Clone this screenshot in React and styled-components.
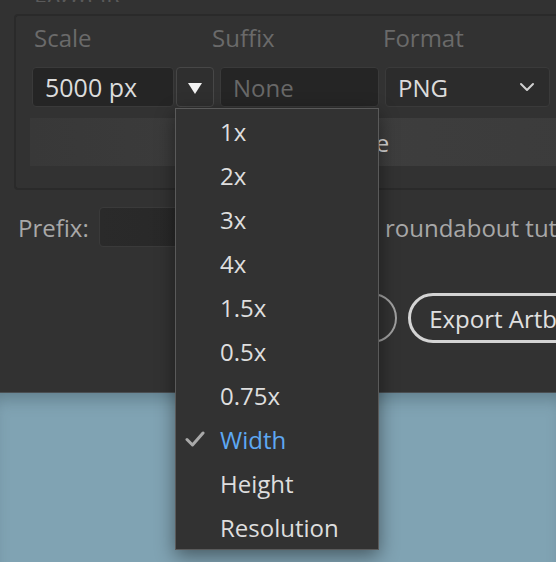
import React from "react";
import styled, { createGlobalStyle } from "styled-components";

const GlobalStyle = createGlobalStyle`
  html, body {
    margin: 0;
    padding: 0;
    height: 100%;
    overflow: hidden;
    background: #80a3b3;
    font-family: "Open Sans", "DejaVu Sans", sans-serif;
  }
  #root {
    height: 100%;
  }
`;

const Page = styled.div`
  height: 100%;
  display: flex;
  flex-direction: column;
`;

const Dialog = styled.div`
  position: relative;
  height: 393px;
  flex: none;
  background: #323232;
  border-bottom: 1px solid #4a4f52;
  box-sizing: border-box;
  padding: 14px 0 0 14px;
  z-index: 1;
`;

const Desktop = styled.div`
  flex: 1;
  background: #80a3b3;
  box-shadow: inset 0 14px 16px -8px rgba(40, 60, 70, 0.35);
`;

const Group = styled.div`
  width: 640px;
  height: 176px;
  box-sizing: border-box;
  border: 2px solid #2a2a2a;
  border-right: none;
  border-radius: 4px 0 0 4px;
  padding: 6px 0 0 16px;
`;

const LabelRow = styled.div`
  display: flex;
  height: 32px;
  margin-bottom: 13px;
`;

const ColLabel = styled.span`
  width: ${(p) => p.$w}px;
  flex: none;
  padding-left: ${(p) => p.$pad || 0}px;
  font-size: 24px;
  line-height: 32px;
  color: #6a6a6a;
`;

const FieldRow = styled.div`
  display: flex;
  align-items: center;
  height: 40px;
`;

const Field = styled.div`
  box-sizing: border-box;
  width: ${(p) => p.$w}px;
  height: 40px;
  flex: none;
  margin-right: ${(p) => p.$gap || 0}px;
  display: flex;
  align-items: center;
  justify-content: space-between;
  padding: 0 ${(p) => p.$padR || 12}px 0 ${(p) => p.$padL || 12}px;
  background: ${(p) => p.$bg || "#252525"};
  border: 1px solid #3a3a3a;
  border-radius: 4px;
  font-size: ${(p) => p.$size || 24}px;
  color: ${(p) => p.$color || "#dcdcdc"};
`;

const DropWrap = styled.div`
  position: relative;
  flex: none;
  margin-right: 6px;
`;

const DropButton = styled.div`
  box-sizing: border-box;
  width: 38px;
  height: 40px;
  display: flex;
  align-items: center;
  justify-content: center;
  background: #2f2f2f;
  border: 1px solid #474747;
  border-radius: 4px;
`;

const Triangle = styled.span`
  width: 0;
  height: 0;
  border-left: 7px solid transparent;
  border-right: 7px solid transparent;
  border-top: 11px solid #f2f2f2;
  margin-top: 2px;
`;

const Menu = styled.ul`
  position: absolute;
  top: 41px;
  left: -1px;
  width: 204px;
  margin: 0;
  padding: 0;
  list-style: none;
  box-sizing: border-box;
  background: #323232;
  border: 1px solid #5a5a5a;
  box-shadow: 0 6px 18px rgba(0, 0, 0, 0.45);
  z-index: 10;
`;

const MenuItem = styled.li`
  position: relative;
  height: 44px;
  display: flex;
  align-items: center;
  padding-left: 44px;
  font-size: 24px;
  color: ${(p) => (p.$active ? "#5ea8f2" : "#dedede")};
`;

const Check = styled.svg`
  position: absolute;
  left: 9px;
  top: 14px;
`;

const AddBar = styled.div`
  margin: 11px 0 0 -2px;
  height: 48px;
  width: 590px;
  display: flex;
  align-items: center;
  justify-content: center;
  background: linear-gradient(90deg, #383838, #3e3e3e 50%, #3b3b3b);
  font-size: 24px;
  color: #d8d8d8;
  white-space: nowrap;
`;

const PrefixRow = styled.div`
  display: flex;
  align-items: center;
  margin: 17px 0 0 4px;
  height: 40px;
`;

const PrefixLabel = styled.span`
  font-size: 24px;
  color: #a8a8a8;
  width: 81px;
  flex: none;
`;

const PrefixInput = styled.div`
  width: 270px;
  height: 40px;
  flex: none;
  box-sizing: border-box;
  background: linear-gradient(90deg, #2a2a2a, #242424);
  border: 1px solid #3a3a3a;
  border-radius: 4px;
  margin-right: 16px;
`;

const Hint = styled.span`
  font-size: 24px;
  color: #a8a8a8;
  white-space: nowrap;
`;

const ButtonRow = styled.div`
  display: flex;
  margin: 46px 0 0 263px;
  gap: 11px;
`;

const PillButton = styled.div`
  box-sizing: border-box;
  height: 50px;
  flex: none;
  display: flex;
  align-items: center;
  padding: 0 24px 0 18px;
  border-radius: 25px;
  border: ${(p) => (p.$primary ? "3px solid #d4d4d4" : "2px solid #a0a0a0")};
  font-size: 24px;
  color: #e0e0e0;
  white-space: nowrap;
`;

const TopTitle = styled.div`
  height: 2px;
  overflow: hidden;
  margin: -14px 0 12px 20px;
  font-size: 24px;
  line-height: 2px;
  color: #5a5a5a;
`;

const scales = ["1x", "2x", "3x", "4x", "1.5x", "0.5x", "0.75x", "Width", "Height", "Resolution"];

export default function App() {
  return (
    <Page>
      <GlobalStyle />
      <Dialog>
        <TopTitle>Formats</TopTitle>
        <Group>
          <LabelRow>
            <ColLabel $w={178} $pad={2}>Scale</ColLabel>
            <ColLabel $w={171}>Suffix</ColLabel>
            <ColLabel $w={120}>Format</ColLabel>
          </LabelRow>
          <FieldRow>
            <Field $w={142} $gap={2} $size={25}>5000 px</Field>
            <DropWrap>
              <DropButton>
                <Triangle />
              </DropButton>
              <Menu>
                {scales.map((s) => (
                  <MenuItem key={s} $active={s === "Width"}>
                    {s === "Width" && (
                      <Check width="20" height="16" viewBox="0 0 20 16">
                        <path d="M2 8.5 L7.5 14 L18 2" fill="none" stroke="#a9a9a9" strokeWidth="3" strokeLinecap="round" strokeLinejoin="round" />
                      </Check>
                    )}
                    {s}
                  </MenuItem>
                ))}
              </Menu>
            </DropWrap>
            <Field $w={159} $gap={6} $color="#686868">None</Field>
            <Field $w={165} $bg="#2c2c2c" $padR={14}>
              PNG
              <svg width="16" height="10" viewBox="0 0 16 10">
                <path d="M2 2 L8 8 L14 2" fill="none" stroke="#d0d0d0" strokeWidth="2" strokeLinecap="round" strokeLinejoin="round" />
              </svg>
            </Field>
          </FieldRow>
          <AddBar>+ Add Scale</AddBar>
        </Group>
        <PrefixRow>
          <PrefixLabel>Prefix:</PrefixLabel>
          <PrefixInput />
          <Hint>roundabout tutorial</Hint>
        </PrefixRow>
        <ButtonRow>
          <PillButton>Cancel</PillButton>
          <PillButton $primary>Export Artboard</PillButton>
        </ButtonRow>
      </Dialog>
      <Desktop />
    </Page>
  );
}
